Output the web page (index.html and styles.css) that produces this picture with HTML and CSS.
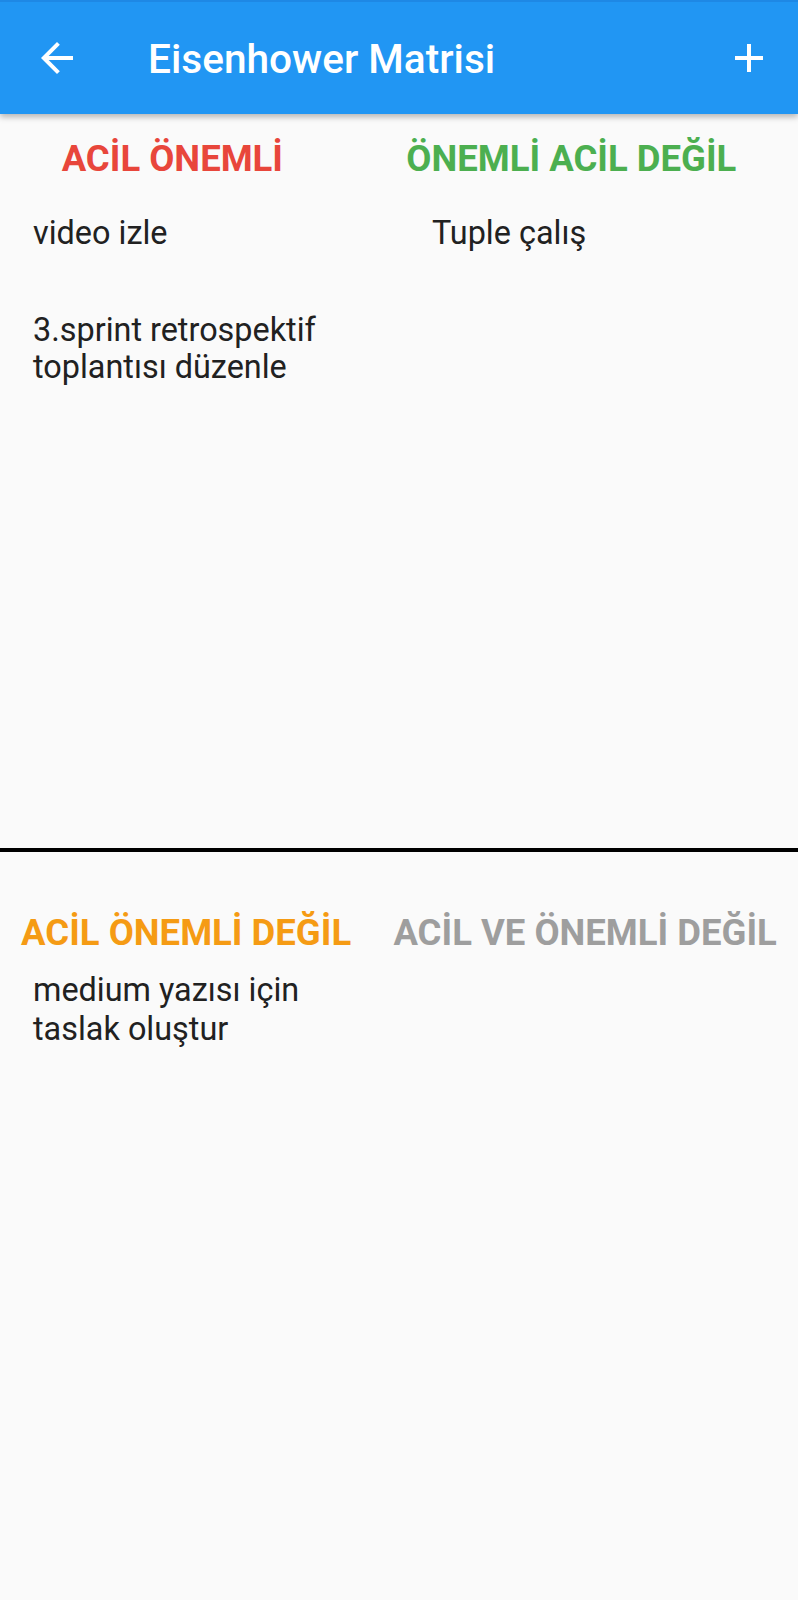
FILE: index.html
```html
<!DOCTYPE html>
<html lang="tr">
<head>
<meta charset="utf-8">
<title>Eisenhower Matrisi</title>
<link rel="stylesheet" href="styles.css">
</head>
<body>
<header class="appbar">
  <button class="icon-btn back" aria-label="Geri">
    <svg viewBox="0 0 24 24" width="48" height="48"><path fill="#fff" d="M20 11H7.83l5.59-5.59L12 4l-8 8 8 8 1.41-1.41L7.83 13H20v-2z"/></svg>
  </button>
  <h1 class="title">Eisenhower Matrisi</h1>
  <button class="icon-btn add" aria-label="Ekle">
    <svg viewBox="0 0 24 24" width="48" height="48"><path fill="#fff" d="M19 13h-6v6h-2v-6H5v-2h6V5h2v6h6v2z"/></svg>
  </button>
</header>
<main class="matrix">
  <section class="half top">
    <div class="heads">
      <h2 class="head red">ACİL ÖNEMLİ</h2>
      <h2 class="head green">ÖNEMLİ ACİL DEĞİL</h2>
    </div>
    <div class="cols">
      <ul class="list">
        <li class="item">video izle</li>
        <li class="item">3.sprint retrospektif<br>toplantısı düzenle</li>
      </ul>
      <ul class="list">
        <li class="item">Tuple çalış</li>
      </ul>
    </div>
  </section>
  <div class="divider"></div>
  <section class="half bottom">
    <div class="heads">
      <h2 class="head orange">ACİL ÖNEMLİ DEĞİL</h2>
      <h2 class="head grey">ACİL VE ÖNEMLİ DEĞİL</h2>
    </div>
    <div class="cols">
      <ul class="list">
        <li class="item">medium yazısı için<br>taslak oluştur</li>
      </ul>
      <ul class="list"></ul>
    </div>
  </section>
</main>
</body>
</html>
```
FILE: styles.css
```css
* { box-sizing: border-box; }
html, body { margin: 0; padding: 0; }
body {
  background: #fafafa;
  font-family: Roboto, "Noto Sans", sans-serif;
  color: #212121;
  width: 798px;
  min-height: 1600px;
}
.appbar {
  height: 114px;
  background: #2196f3;
  border-top: 2px solid #1e88e5;
  display: flex;
  align-items: center;
  padding: 0 25px 0 33px;
  box-shadow: 0 3px 6px rgba(0,0,0,0.28);
  position: relative;
  z-index: 1;
}
.icon-btn {
  background: none;
  border: 0;
  padding: 0;
  width: 48px;
  height: 48px;
  display: flex;
}
.title {
  margin: 0 0 0 67px;
  padding-top: 2px;
  font-size: 40.6px;
  font-weight: 500;
  color: #fff;
  flex: 1;
}
.matrix { display: flex; flex-direction: column; }
.half.top { height: 734px; }
.divider { height: 4px; background: #000; }
.heads {
  display: flex;
  justify-content: space-around;
}
.head {
  margin: 0;
  font-size: 36.5px;
  font-weight: 700;
  line-height: 44px;
}
.top .heads { margin-top: 23px; }
.bottom .heads { margin-top: 59px; }
.red { color: #e8463b; }
.green { color: #4caf50; }
.orange { color: #f59b14; }
.grey { color: #9e9e9e; }
.cols {
  display: grid;
  grid-template-columns: 1fr 1fr;
}
.list {
  list-style: none;
  margin: 0;
  padding: 0 0 0 33px;
}
.item {
  font-size: 32.4px;
  line-height: 37px;
}
.top .list { padding-top: 4px; }
.top .item { padding: 30px 0; }
.bottom .item { line-height: 38.5px; padding-top: 16px; }
```
